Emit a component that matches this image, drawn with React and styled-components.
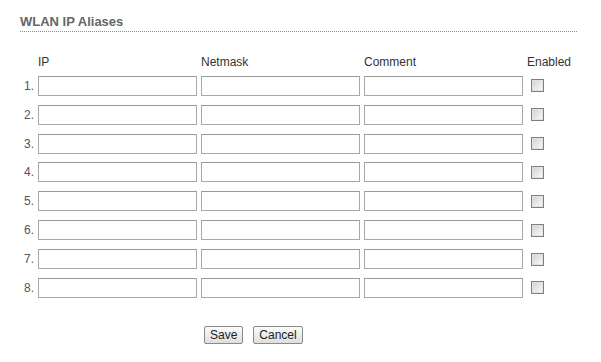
import React from "react"
import styled, { createGlobalStyle } from "styled-components"

const GlobalStyle = createGlobalStyle`
  body {
    margin: 0;
    background: #ffffff;
    font-family: "Liberation Sans", Arial, sans-serif;
  }
`

const Page = styled.div`
  width: 601px;
  height: 362px;
  padding: 14px 0 0 20px;
  box-sizing: border-box;
`

const Title = styled.h2`
  margin: 0;
  width: 557px;
  padding-bottom: 2px;
  font-size: 13px;
  line-height: 15px;
  font-weight: bold;
  color: #666666;
  border-bottom: 1px dotted #8c8c8c;
`

const Grid = styled.div`
  display: grid;
  grid-template-columns: 14px 159px 159px 159px auto;
  column-gap: 4px;
  row-gap: 8.86px;
  align-items: center;
  margin-top: 23px;
`

const HeaderCell = styled.div`
  font-size: 12px;
  line-height: 14px;
  color: #333333;
  margin-bottom: -2px;
`

const RowLabel = styled.div`
  font-size: 12px;
  color: #555555;
  text-align: right;
`

const TextInput = styled.input`
  box-sizing: border-box;
  width: 159px;
  height: 20px;
  margin: 0;
  border: 1px solid #a8a8a8;
  border-top-color: #9a9a9a;
  background: #ffffff;
  font-family: inherit;
  font-size: 12px;
`

const Check = styled.input`
  appearance: none;
  box-sizing: border-box;
  width: 13px;
  height: 13px;
  margin: 0 0 0 4px;
  border: 1px solid #7f7f7f;
  background: linear-gradient(135deg, #cfcfcf 0%, #ededed 65%, #fafafa 100%);
  box-shadow: inset 0 0 0 1px #e2e2e2;
`

const Actions = styled.div`
  display: flex;
  gap: 10px;
  padding: 28px 0 0 184px;
`

const Button = styled.button`
  height: 18px;
  padding: 0 5px;
  font-family: inherit;
  font-size: 12px;
  line-height: 14px;
  color: #222222;
  border: 1px solid #8a8a8a;
  border-radius: 2px;
  background: linear-gradient(#fbfbfb, #dedede);
`

const rows = [1, 2, 3, 4, 5, 6, 7, 8]

export default function App() {
  return (
    <>
      <GlobalStyle />
      <Page>
        <Title>WLAN IP Aliases</Title>
        <Grid>
          <span />
          <HeaderCell>IP</HeaderCell>
          <HeaderCell>Netmask</HeaderCell>
          <HeaderCell>Comment</HeaderCell>
          <HeaderCell>Enabled</HeaderCell>
          {rows.map((n) => (
            <React.Fragment key={n}>
              <RowLabel>{n}.</RowLabel>
              <TextInput type="text" />
              <TextInput type="text" />
              <TextInput type="text" />
              <Check type="checkbox" />
            </React.Fragment>
          ))}
        </Grid>
        <Actions>
          <Button>Save</Button>
          <Button>Cancel</Button>
        </Actions>
      </Page>
    </>
  )
}
